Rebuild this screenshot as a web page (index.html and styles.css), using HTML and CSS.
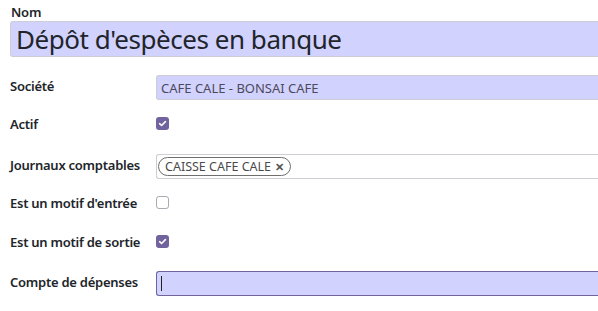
FILE: index.html
```html
<!DOCTYPE html>
<html lang="fr">
<head>
<meta charset="utf-8">
<link rel="stylesheet" href="styles.css">
</head>
<body>
<div class="form">
  <div class="title">
    <label class="title-label">Nom</label>
    <div class="title-input">Dépôt d'espèces en banque</div>
  </div>
  <div class="rows">
    <div class="row r-societe">
      <div class="lbl">Société</div>
      <div class="field"><div class="input filled">CAFE CALE - BONSAI CAFE</div></div>
    </div>
    <div class="row r-actif">
      <div class="lbl">Actif</div>
      <div class="field"><span class="check on"><svg viewBox="0 0 13 13" width="13" height="13"><path d="M3.6 6.7 L5.6 8.5 L9.4 4.6" fill="none" stroke="#fff" stroke-width="1.6" stroke-linecap="round" stroke-linejoin="round"/></svg></span></div>
    </div>
    <div class="row r-journaux">
      <div class="lbl">Journaux comptables</div>
      <div class="field"><div class="input tags"><span class="tag">CAISSE CAFE CALE <span class="x">✕</span></span></div></div>
    </div>
    <div class="row r-entree">
      <div class="lbl">Est un motif d'entrée</div>
      <div class="field"><span class="check off"></span></div>
    </div>
    <div class="row r-sortie">
      <div class="lbl">Est un motif de sortie</div>
      <div class="field"><span class="check on"><svg viewBox="0 0 13 13" width="13" height="13"><path d="M3.6 6.7 L5.6 8.5 L9.4 4.6" fill="none" stroke="#fff" stroke-width="1.6" stroke-linecap="round" stroke-linejoin="round"/></svg></span></div>
    </div>
    <div class="row r-compte">
      <div class="lbl">Compte de dépenses</div>
      <div class="field"><div class="input focus"><span class="caret"></span></div></div>
    </div>
  </div>
</div>
</body>
</html>
```
FILE: styles.css
```css
html, body {
  margin: 0;
  padding: 0;
  background: #ffffff;
  width: 598px;
  height: 311px;
  overflow: hidden;
}
body {
  font-family: "Noto Sans", "Open Sans", sans-serif;
  color: #212529;
  font-size: 13px;
}
.form {
  padding-left: 10px;
}
.title-label {
  display: block;
  font-weight: 600;
  font-size: 13px;
  line-height: 16px;
  padding-top: 4px;
  padding-left: 1px;
  height: 17px;
  letter-spacing: -0.2px;
}
.title-input {
  height: 34px;
  margin-right: -20px;
  background: #d2d2ff;
  border: 1px solid #cdcdd6;
  border-right: none;
  border-radius: 3px 0 0 3px;
  font-size: 26px;
  line-height: 34px;
  padding-left: 5px;
  color: #212529;
  letter-spacing: -0.45px;
}
.rows {
  display: flex;
  flex-direction: column;
  margin-top: 18px;
}
.row {
  display: flex;
  align-items: center;
  height: 25px;
}
.lbl {
  width: 146px;
  flex: none;
  font-weight: 600;
  line-height: 16px;
  margin-top: -3px;
  letter-spacing: -0.25px;
}
.r-actif .lbl, .r-entree .lbl, .r-sortie .lbl {
  margin-top: 1px;
}
.field {
  flex: 1;
  display: flex;
  align-items: center;
  margin-right: -20px;
}
.input {
  flex: 1;
  height: 23px;
  border: 1px solid #cdcdd6;
  border-right: none;
  border-radius: 3px 0 0 3px;
  display: flex;
  align-items: center;
  padding-left: 4px;
}
.input.filled {
  background: #d2d2ff;
  color: #4a4a5a;
}
.input.tags {
  background: #ffffff;
  padding-left: 1px;
}
.input.focus {
  background: #d2d2ff;
  border-color: #71639e;
  height: 23px;
}
.caret {
  width: 1px;
  height: 15px;
  background: #222;
}
.tag {
  display: inline-flex;
  align-items: center;
  height: 17px;
  border: 1px solid #6e6e6e;
  border-radius: 10px;
  padding: 0 6px 0 6px;
  color: #4a4a4a;
  font-size: 12.5px;
  letter-spacing: 0;
}
.tag .x {
  font-size: 11px;
  font-weight: 700;
  margin-left: 4px;
  color: #555;
}
.check {
  width: 13px;
  height: 13px;
  border-radius: 3px;
  box-sizing: border-box;
  display: inline-block;
}
.check svg { display: block; }
.check.on {
  background: #71639e;
}
.check.off {
  border: 1px solid #a9a9b2;
  background: #fff;
}
.r-actif { margin-top: 11px; }
.r-journaux { margin-top: 18px; }
.r-entree { margin-top: 11px; }
.r-sortie { margin-top: 14px; }
.r-compte { margin-top: 17px; }
```
